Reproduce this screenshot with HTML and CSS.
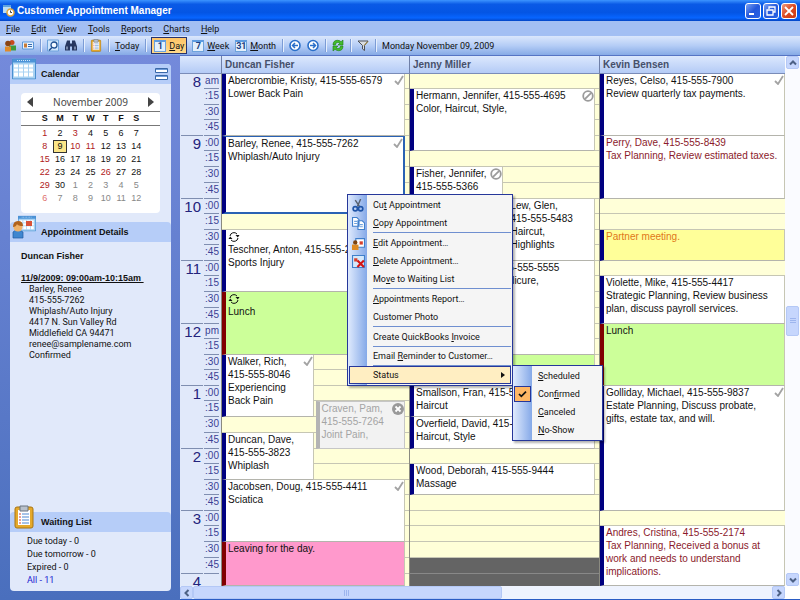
FILE: index.html
```html
<!DOCTYPE html>
<html lang="en">
  <head>
    <meta charset="UTF-8" />
    <meta name="viewport" content="width=device-width, initial-scale=1.0" />
    <title>Customer Appointment Manager</title>
    <link rel="stylesheet" href="styles.css">
  </head>
  <body>
    <!-- shared icons -->
    <svg class="defs" aria-hidden="true">
      <symbol id="check" viewBox="0 0 10 10"><path d="M1 6l3 3 5-8" fill="none" stroke="#a3a3a3" stroke-width="1.8" /></symbol>
      <symbol id="noshow" viewBox="0 0 12 12"><circle cx="6" cy="6" r="4.8" fill="#fff" stroke="#9b9b9b" stroke-width="1.8" /><path d="M2.8 9.2l6.4-6.4" stroke="#9b9b9b" stroke-width="1.8" /></symbol>
      <symbol id="cancel" viewBox="0 0 12 12"><circle cx="6" cy="6" r="6" fill="#999" /><path d="M3.5 3.5l5 5M8.5 3.5l-5 5" stroke="#fff" stroke-width="1.8" /></symbol>
      <symbol id="recur" viewBox="0 0 12 12"><path d="M2 5a4 4 0 0 1 7-2M10 7a4 4 0 0 1-7 2" fill="none" stroke="#111" /><path d="M11.500 4H7.500L9.800 6.500zM.500 8H4.500L2.200 5.500z" fill="#111" /></symbol>
      <symbol id="cal" viewBox="0 0 24 21">
        <path d="M0 0h24v21H0z" fill="#a9d2f2" /><path d="M0 0h24v4H0z" fill="#4d94d8" /><path d="M5 2h14" stroke="#d3e9fb" stroke-dasharray="1 1" />
        <path d="M2 6h4v3H2zM7 6h4v3H7zM12 6h4v3h-4zM17 6h4v3h-4zM2 10h4v3H2zM7 10h4v3H7zM12 10h4v3h-4zM17 10h4v3h-4zM2 14h4v4H2zM7 14h4v4H7zM12 14h4v4h-4zM17 14h4v4h-4z" fill="#fff" />
        <path d="M.5.500h23v20H.500z" fill="none" stroke="#4a8fd0" />
      </symbol>
      <symbol id="clip" viewBox="0 0 20 24">
        <rect x="1" y="2" width="18" height="21" rx="2" fill="#e5a92b" stroke="#a87412" /><path d="M4 5h12v15H4z" fill="#fff" />
        <path d="M6 1h8v5H6z" fill="#b9c1cb" stroke="#6b7480" /><path d="M8 9h7M8 12h7M8 15h7M8 18h7" stroke="#4c87d1" /><path d="M5 9h2M5 12h2M5 15h2M5 18h2" stroke="#d2402c" />
      </symbol>
    </svg>

    <header class="title-bar">
      <svg class="app-icon" viewBox="0 0 12 12"><path d="M0 0h8v8H0z" fill="#b9dcf5" /><path d="M0 0h8v2H0z" fill="#5fa3de" /><circle cx="7.500" cy="7.500" r="3.500" fill="#fff" stroke="#e0a63c" stroke-width="1.500" /><path d="M7.500 5.500v2h1.500" fill="none" stroke="#444" /></svg>
      <h1>Customer Appointment Manager</h1>
      <div class="window-buttons">
        <button aria-label="Minimize"><svg viewBox="0 0 14 14"><path d="M3 10h5" stroke="#fff" stroke-width="2" /></svg></button>
        <button aria-label="Restore"><svg viewBox="0 0 14 14"><path d="M5 5V3h6v5H9M3 6h6v5H3z" fill="none" stroke="#fff" stroke-width="1.300" /></svg></button>
        <button class="close" aria-label="Close"><svg viewBox="0 0 14 14"><path d="M3 3l8 8M11 3l-8 8" stroke="#fff" stroke-width="1.800" /></svg></button>
      </div>
    </header>

    <nav class="menu-bar">
      <button><u>F</u>ile</button>
      <button><u>E</u>dit</button>
      <button><u>V</u>iew</button>
      <button><u>T</u>ools</button>
      <button><u>R</u>eports</button>
      <button><u>C</u>harts</button>
      <button><u>H</u>elp</button>
    </nav>

    <div class="toolbar">
      <button aria-label="Customers"><svg viewBox="0 0 12 12"><circle cx="8" cy="3" r="2.500" fill="#c84a1e" /><path d="M5 6h7v5H5z" fill="#3f9a3a" /><circle cx="4" cy="4" r="2.800" fill="#8a4413" /><path d="M1 7h6v5H1z" fill="#e08a28" /></svg></button>
      <button aria-label="Customer card"><svg viewBox="0 0 12 12"><path d="M.500 2.500h11v7H.500z" fill="#eaf4ff" stroke="#5b96d6" /><path d="M2 4h3v4H2z" fill="#c77a36" /><path d="M6 5h4M6 7h4" stroke="#356bb0" /></svg></button>
      <span class="divider"></span>
      <button aria-label="Find appointment"><svg viewBox="0 0 12 12"><path d="M.500.500h11v11H.500z" fill="#cfe5fb" stroke="#6ea3dc" /><circle cx="7" cy="5.500" r="3" fill="#f4faff" stroke="#1f4f91" stroke-width="1.300" /><path d="M5 8l-3 3" stroke="#1f4f91" stroke-width="1.500" /></svg></button>
      <button aria-label="Find"><svg viewBox="0 0 12 12"><path d="M2 1h3v3h2V1h3l2 6v4H7V7H5v4H0V7z" fill="#27365e" /><path d="M2 7v3M10 7v3" stroke="#c9d8f2" /></svg></button>
      <span class="divider"></span>
      <button aria-label="Waiting list"><svg viewBox="0 0 20 24"><use href="#clip" /></svg></button>
      <span class="divider"></span>
      <button><span><u>T</u>oday</span></button>
      <span class="divider"></span>
      <button class="selected"><span class="num">1</span><span><u>D</u>ay</span></button>
      <button><span class="num">7</span><span><u>W</u>eek</span></button>
      <button><span class="num">31</span><span><u>M</u>onth</span></button>
      <span class="divider"></span>
      <button aria-label="Back"><svg viewBox="0 0 12 12"><circle cx="6" cy="6" r="5" fill="#fff" stroke="#2a6fc9" stroke-width="1.600" /><path d="M9 6H4M6 3.500L3.500 6 6 8.500" fill="none" stroke="#2a6fc9" stroke-width="1.500" /></svg></button>
      <button aria-label="Forward"><svg viewBox="0 0 12 12"><circle cx="6" cy="6" r="5" fill="#fff" stroke="#2a6fc9" stroke-width="1.600" /><path d="M3 6h5M6 3.500L8.500 6 6 8.500" fill="none" stroke="#2a6fc9" stroke-width="1.500" /></svg></button>
      <span class="divider"></span>
      <button aria-label="Refresh"><svg viewBox="0 0 12 12"><path d="M1 5.500C1 2 3 .800 5.500.800 7 .800 8 1.300 9 2.200L11 .500V5.500H6L7.800 3.700C6 2.300 3.500 3 3.500 5.500zM11 6.500C11 10 9 11.200 6.500 11.200 5 11.200 4 10.700 3 9.800L1 11.500V6.500H6L4.200 8.300C6 9.700 8.500 9 8.500 6.500z" fill="#43bd2c" stroke="#1c7a16" stroke-width=".6" /></svg></button>
      <span class="divider"></span>
      <button aria-label="Filter"><svg viewBox="0 0 12 12"><path d="M1 1.500h10L7.500 6v5l-2-1.500V6z" fill="#d9dde2" stroke="#4c5057" /><path d="M7 6l4-4" stroke="#b5912f" /></svg></button>
      <span class="divider"></span>
      <time datetime="2009-11-09">Monday November 09, 2009</time>
    </div>

    <main class="workspace">
      <aside class="sidebar">
        <div class="panel">
          <section>
            <div class="panel-head">
              <svg class="panel-icon" viewBox="0 0 24 21"><use href="#cal" /></svg>
              <h2>Calendar</h2>
              <button class="collapse" aria-label="Collapse"><svg viewBox="0 0 13 13"><path d="M.500.500h12v4H.500zM.500 7.500h12v4H.500z" fill="#fff" stroke="#3a68a8" /><path d="M1 1.500h11M1 8.500h11" stroke="#6f9bd8" /></svg></button>
            </div>
            <div class="month">
              <div class="month-head">
                <button aria-label="Previous month"><svg viewBox="0 0 6 10"><path d="M6 0v10L0 5z" fill="#444" /></svg></button>
                <span>November 2009</span>
                <button aria-label="Next month"><svg viewBox="0 0 6 10"><path d="M0 0v10l6-5z" fill="#444" /></svg></button>
              </div>
              <table>
                <thead>
                  <tr><th>S</th><th>M</th><th>T</th><th>W</th><th>T</th><th>F</th><th>S</th></tr>
                </thead>
                <tbody>
                  <tr><td class="busy">1</td><td>2</td><td class="busy">3</td><td>4</td><td>5</td><td>6</td><td>7</td></tr>
                  <tr><td class="busy">8</td><td><span class="today">9</span></td><td class="busy">10</td><td class="busy">11</td><td>12</td><td>13</td><td>14</td></tr>
                  <tr><td class="busy">15</td><td>16</td><td>17</td><td>18</td><td>19</td><td>20</td><td>21</td></tr>
                  <tr><td class="busy">22</td><td>23</td><td>24</td><td>25</td><td class="busy">26</td><td>27</td><td>28</td></tr>
                  <tr><td class="busy">29</td><td>30</td><td class="next">1</td><td class="next">2</td><td class="next">3</td><td class="next">4</td><td class="next">5</td></tr>
                  <tr><td class="busy next">6</td><td class="next">7</td><td class="next">8</td><td class="next">9</td><td class="next">10</td><td class="next">11</td><td class="next">12</td></tr>
                </tbody>
              </table>
            </div>
          </section>

          <section class="details">
            <div class="panel-head">
              <svg class="panel-icon" viewBox="0 0 24 24"><svg x="6" y="0" width="18" height="17" viewBox="0 0 24 21"><use href="#cal" /></svg><path d="M14 6h6v5h-6z" fill="#d95238" /><path d="M1 17q4-4 10 0v6H1z" fill="#3f86cf" stroke="#1f5aa0" stroke-width=".7" /><circle cx="6" cy="12" r="4.500" fill="#efb26a" /><path d="M1 12q0-6 5-6t5 5q-5 0-6-2-1 3-4 3z" fill="#b1621c" /></svg>
              <h2>Appointment Details</h2>
            </div>
            <h3>Duncan Fisher</h3>
            <h4>11/9/2009: 09:00am-10:15am&nbsp;</h4>
            <address>
              Barley, Renee<br>
              415-555-7262<br>
              Whiplash/Auto Injury<br>
              4417 N. Sun Valley Rd<br>
              Middlefield CA 94471<br>
              renee@samplename.com<br>
              Confirmed
            </address>
          </section>

          <section class="waiting">
            <div class="panel-head">
              <svg class="panel-icon" viewBox="0 0 20 24"><use href="#clip" /></svg>
              <h2>Waiting List</h2>
            </div>
            <ul>
              <li>Due today - 0</li>
              <li>Due tomorrow - 0</li>
              <li>Expired - 0</li>
              <li><a href="#all">All - 11</a></li>
            </ul>
          </section>
        </div>
      </aside>

      <div class="schedule">
        <div class="corner"></div>
        <h2 class="name">Duncan Fisher</h2>
        <h2 class="name">Jenny Miller</h2>
        <h2 class="name">Kevin Bensen</h2>

        <div class="times">
          <b>8</b><span>am</span><span>:15</span><span>:30</span><span>:45</span>
          <b>9</b><span>:00</span><span>:15</span><span>:30</span><span>:45</span>
          <b>10</b><span>:00</span><span>:15</span><span>:30</span><span>:45</span>
          <b>11</b><span>:00</span><span>:15</span><span>:30</span><span>:45</span>
          <b>12</b><span>pm</span><span>:15</span><span>:30</span><span>:45</span>
          <b>1</b><span>:00</span><span>:15</span><span>:30</span><span>:45</span>
          <b>2</b><span>:00</span><span>:15</span><span>:30</span><span>:45</span>
          <b>3</b><span>:00</span><span>:15</span><span>:30</span><span>:45</span>
          <b>4</b>
        </div>

        <div class="column">
          <article class="appt at-0800 len-4"><svg class="mark"><use href="#check" /></svg>Abercrombie, Kristy, 415-555-6579<br>Lower Back Pain</article>
          <article class="appt active at-0900 len-5"><svg class="mark"><use href="#check" /></svg>Barley, Renee, 415-555-7262<br>Whiplash/Auto Injury</article>
          <article class="appt at-1030 len-4"><svg class="recur"><use href="#recur" /></svg>Teschner, Anton, 415-555-2210<br>Sports Injury</article>
          <article class="appt lunch at-1130 len-4"><svg class="recur"><use href="#recur" /></svg>Lunch</article>
          <article class="appt left at-1230 len-4"><svg class="mark"><use href="#check" /></svg>Walker, Rich,<br>415-555-8046<br>Experiencing<br>Back Pain</article>
          <article class="appt right canceled at-1315 len-3"><svg class="mark round"><use href="#cancel" /></svg>Craven, Pam,<br>415-555-7264<br>Joint Pain,</article>
          <article class="appt left at-1345 len-3">Duncan, Dave,<br>415-555-3823<br>Whiplash</article>
          <article class="appt at-1430 len-4"><svg class="mark"><use href="#check" /></svg>Jacobsen, Doug, 415-555-4411<br>Sciatica</article>
          <article class="appt leave at-1530 len-3">Leaving for the day.</article>
        </div>

        <div class="column">
          <article class="appt at-0815 len-4"><svg class="mark round"><use href="#noshow" /></svg>Hermann, Jennifer, 415-555-4695<br>Color, Haircut, Style,</article>
          <article class="appt left at-0930 len-4"><svg class="mark round"><use href="#noshow" /></svg>Fisher, Jennifer,<br>415-555-5366</article>
          <article class="appt right at-1000 len-4">Lew, Glen,<br>415-555-5483<br>Haircut,<br>Highlights</article>
          <article class="appt at-1100 len-6">Harrison, Sharon, 415-555-5555<br>Deluxe Manicure, Pedicure,</article>
          <article class="appt lunch at-1230 len-2"></article>
          <article class="appt at-1300 len-2">Smallson, Fran, 415-555-2847<br>Haircut</article>
          <article class="appt at-1330 len-2">Overfield, David, 415-555-3019<br>Haircut, Style</article>
          <article class="appt at-1415 len-2">Wood, Deborah, 415-555-9444<br>Massage</article>
          <div class="closed"></div>
        </div>

        <div class="column last">
          <article class="appt at-0800 len-4"><svg class="mark"><use href="#check" /></svg>Reyes, Celso, 415-555-7900<br>Review quarterly tax payments.</article>
          <article class="appt pending at-0900 len-4">Perry, Dave, 415-555-8439<br>Tax Planning, Review estimated taxes.</article>
          <article class="appt meeting at-1030 len-2">Partner meeting.</article>
          <article class="appt at-1115 len-3">Violette, Mike, 415-555-4417<br>Strategic Planning, Review business plan, discuss payroll services.</article>
          <article class="appt lunch at-1200 len-4">Lunch</article>
          <article class="appt at-1300 len-8"><svg class="mark"><use href="#check" /></svg>Golliday, Michael, 415-555-9837<br>Estate Planning, Discuss probate, gifts, estate tax, and will.</article>
          <article class="appt pending at-1515 len-4">Andres, Cristina, 415-555-2174<br>Tax Planning, Received a bonus at work and needs to understand implications.</article>
        </div>

        <div class="scroll-v">
          <button aria-label="Scroll up"><svg viewBox="0 0 8 8"><path d="M1 5.500l3-3 3 3" /></svg></button>
          <div class="thumb"></div>
          <button aria-label="Scroll down"><svg viewBox="0 0 8 8"><path d="M1 2.500l3 3 3-3" /></svg></button>
        </div>
        <div class="scroll-h">
          <button aria-label="Scroll left"><svg viewBox="0 0 8 8"><path d="M5.500 1l-3 3 3 3" /></svg></button>
          <div class="thumb"></div>
          <button aria-label="Scroll right"><svg viewBox="0 0 8 8"><path d="M2.500 1l3 3-3 3" /></svg></button>
        </div>

        <div class="menu context">
          <button><svg viewBox="0 0 12 12"><path d="M8 0L5 7M3 1l4 6" stroke="#56606e" stroke-width="1.300" /><circle cx="3" cy="9" r="2" fill="none" stroke="#1f55a8" stroke-width="1.500" /><circle cx="8" cy="9" r="2" fill="none" stroke="#1f55a8" stroke-width="1.500" /></svg>Cu<u>t</u> Appointment</button>
          <button><svg viewBox="0 0 12 12"><path d="M.500.500h4l2 2v6h-6zM5.500 3.500h4l2 2v6h-6z" fill="#fff" stroke="#3f7fcb" /><path d="M2 4h3M2 6h3M7 7h3M7 9h3" stroke="#6fa3de" /></svg><u>C</u>opy Appointment</button>
          <hr>
          <button><svg viewBox="0 0 12 12"><path d="M3.500 1.500h8v8h-8z" fill="#fff" stroke="#3f7fcb" /><path d="M7 4h3v3H7z" fill="#d7402c" /><circle cx="3" cy="5" r="2" fill="#7d430f" /><path d="M0 7h6v5H0z" fill="#dd8a23" /></svg><u>E</u>dit Appointment…</button>
          <button><svg viewBox="0 0 12 12"><path d="M.500.500h11v11H.500z" fill="#d5e8fb" stroke="#3f7fcb" /><path d="M2 3h3v3H2z" fill="#d7402c" /><path d="M5 5l6 6M11 5l-6 6" stroke="#d41515" stroke-width="2" /></svg><u>D</u>elete Appointment…</button>
          <button>Mo<u>v</u>e to Waiting List</button>
          <hr>
          <button><u>A</u>ppointments Report…</button>
          <button>Customer Photo</button>
          <hr>
          <button>Create QuickBooks <u>I</u>nvoice</button>
          <hr class="tight">
          <button>Email <u>R</u>eminder to Customer…</button>
          <hr class="tight">
          <button class="open">Status<svg class="arrow" viewBox="0 0 4 6"><path d="M0 0v6l4-3z" fill="#111" /></svg></button>
        </div>
        <div class="menu submenu">
          <button><u>S</u>cheduled</button>
          <button><svg class="ticked" viewBox="0 0 12 12"><path d="M3 6l2 2 4-4" fill="none" stroke="#111" stroke-width="1.500" /></svg>Con<u>f</u>irmed</button>
          <button><u>C</u>anceled</button>
          <button><u>N</u>o-Show</button>
        </div>
      </div>
    </main>
  </body>
</html>
```

FILE: styles.css
```css
* {
  box-sizing: border-box;
}

body {
  margin: 0;
  height: 100vh;
  display: flex;
  flex-direction: column;
  overflow: hidden;
  font-family: "Liberation Sans", Arial, sans-serif;
  font-size: 9px;
  color: #111;
  background-color: #4a6fbd;
}

button {
  margin: 0;
  padding: 0;
  border: 0;
  background: none;
  font: inherit;
  color: inherit;
}

svg {
  display: block;
}

.defs {
  position: absolute;
  width: 0;
  height: 0;
}

h1,
h2,
h3,
h4,
ul {
  margin: 0;
  padding: 0;
  font-size: inherit;
}

/* window frame */

.title-bar {
  display: flex;
  align-items: center;
  height: 21px;
  padding: 0 3px;
  background: linear-gradient(#3c94ff, #0a5ae6 20%, #0455e4 60%, #0765ff 85%, #0345c5);
}

.app-icon {
  width: 12px;
  height: 12px;
  margin-right: 2px;
}

.title-bar h1 {
  flex: 1;
  font-size: 10px;
  color: #fff;
}

.window-buttons {
  display: flex;
  gap: 2px;
}

.window-buttons button {
  width: 16px;
  height: 16px;
  border: 1px solid #fff;
  border-radius: 3px;
  background: linear-gradient(135deg, #7ba2f2, #2458dc 50%, #2a63e4);
}

.window-buttons .close {
  background: linear-gradient(135deg, #ee9b80, #dc4a22 50%, #c83a12);
}

.menu-bar {
  display: flex;
  gap: 11px;
  height: 15px;
  padding: 0 6px;
  background-color: #a3bff3;
  font-family: Roboto, sans-serif;
}

.toolbar {
  display: flex;
  align-items: center;
  gap: 6px;
  height: 19px;
  padding: 0 4px;
  background: linear-gradient(#dbe7fc, #b5cdf6 50%, #86aae6);
  font-family: Roboto, sans-serif;
}

.toolbar button {
  display: flex;
  align-items: center;
  gap: 3px;
}

.toolbar svg {
  width: 12px;
  height: 13px;
}

.toolbar .divider {
  width: 1px;
  height: 13px;
  background-color: #7c9cd6;
  box-shadow: 1px 0 #e6effd;
}

.toolbar .num {
  width: 12px;
  height: 12px;
  border: 1px solid #6ea3dc;
  border-top: 2px solid #5d9be0;
  background-color: #e2effc;
  color: #1c3f80;
  font-weight: bold;
  line-height: 9px;
  text-align: center;
}

.toolbar .selected {
  height: 17px;
  margin: 0 -1px;
  padding: 0 2px;
  border: 1px solid #26336f;
  background: linear-gradient(#ffc566, #ffd98a);
}

.workspace {
  flex: 1;
  min-height: 0;
  display: flex;
}

/* sidebar */

.sidebar {
  width: 180px;
  display: flex;
  padding: 9px 9px 9px 10px;
  background: linear-gradient(#748adb, #4a6fbd);
}

.panel {
  flex: 1;
  display: flex;
  flex-direction: column;
  border-radius: 4px;
  background-color: #e1e9fa;
}

.panel-head {
  display: flex;
  align-items: center;
  height: 20px;
  padding: 0 3px 0 2px;
  border-radius: 4px 4px 0 0;
  background-color: #b6cdf8;
}

.panel-head h2 {
  flex: 1;
}

.panel-icon {
  width: 24px;
  height: 24px;
  margin: -10px 5px 0 0;
}

.collapse svg {
  width: 13px;
  height: 13px;
}

.month {
  margin: 9px 11px;
  height: 120px;
  border-radius: 4px;
  background-color: #fff;
}

.month-head {
  display: flex;
  justify-content: space-between;
  align-items: center;
  height: 19px;
  padding: 0 6px;
  border-bottom: 1px solid #777;
  color: #4a4a4a;
  font-family: "Noto Sans", sans-serif;
  font-size: 10px;
}

.month-head svg {
  width: 6px;
  height: 10px;
}

.month table {
  width: 100%;
  padding: 0 16px;
  border-spacing: 0;
  table-layout: fixed;
  text-align: center;
  background: linear-gradient(#777, #777) 0 13px / 100% 1px no-repeat;
}

.month th,
.month td {
  padding: 0;
  height: 13px;
  line-height: 13px;
}

.month thead th {
  height: 15px;
  line-height: 13px;
  vertical-align: top;
}

.month .next {
  color: #888;
}

.month .busy {
  color: #b02020;
}

.month .busy.next {
  color: #e07070;
}

.month .today {
  display: block;
  margin: 0 1px;
  border: 1px solid #333;
  background-color: #fbe588;
  line-height: 11px;
}

.details h3 {
  margin: 9px 11px 11px;
  line-height: 11px;
}

.details h4 {
  margin: 0 11px;
  line-height: 11px;
  text-decoration: underline;
}

.details address {
  padding: 0 19px;
  font-family: Roboto, sans-serif;
  font-style: normal;
  line-height: 11px;
}

.waiting {
  margin-top: auto;
  font-family: Roboto, sans-serif;
}

.waiting h2 {
  font-family: "Liberation Sans", Arial, sans-serif;
}

.waiting ul {
  padding: 3px 17px 4px;
  line-height: 13px;
  list-style: none;
}

.waiting a {
  color: #1a1ad0;
  text-decoration: none;
}

/* day view */

.schedule {
  position: relative;
  flex: 1;
  min-width: 0;
  display: grid;
  grid-template-columns: 41px 188fr 190fr 186fr 15px;
  grid-template-rows: 18px 1fr 13px;
  border-top: 1px solid #5674c4;
  border-bottom: 1px solid #2a5cc4;
  background-color: #fff;
}

.corner,
.name {
  border-bottom: 1px solid #7a8cb8;
  background: linear-gradient(#dce8fd, #b4cbf6);
}

.name {
  padding-left: 3px;
  border-left: 1px solid #6f7fa8;
  font-size: 10px;
  line-height: 17px;
  color: #46506a;
}

/* two hours take 125px, split over eight quarter rows */
.times,
.column {
  grid-row: 2;
  min-height: 0;
  display: grid;
  grid-template-rows: repeat(4, 15px 16px 15px 16px 15px 16px 16px 16px) 1fr;
  overflow: hidden;
}

.times {
  grid-template-columns: 22px 15px;
  column-gap: 1px;
  padding-left: 1px;
  background-color: #e1e9fa;
  color: #23237c;
}

.times b {
  grid-column: 1;
  grid-row: span 4;
  padding-right: 2px;
  font-size: 15px;
  font-weight: normal;
  line-height: 16px;
  text-align: right;
  border-bottom: 1px solid #7f8eb0;
}

.times b:last-child {
  border: 0;
  grid-row: span 1;
}

.times span {
  grid-column: 2;
  font-size: 10px;
  line-height: 13px;
  text-align: right;
  color: #3a3f94;
  border-bottom: 1px solid #7f8eb0;
}

.column {
  --line: #c6c6b4;
  grid-template-columns: 1fr 1fr;
  padding-right: 4px;
  border-left: 1px solid #8a8a80;
  background-color: #ffffd8;
  background-image: linear-gradient(
    transparent 14px, var(--line) 14px 15px,
    transparent 15px 30px, var(--line) 30px 31px,
    transparent 31px 45px, var(--line) 45px 46px,
    transparent 46px 61px, var(--line) 61px 62px,
    transparent 62px 76px, var(--line) 76px 77px,
    transparent 77px 92px, var(--line) 92px 93px,
    transparent 93px 108px, var(--line) 108px 109px,
    transparent 109px 124px, var(--line) 124px 125px
  );
  background-size: 100% 125px;
}

.column.last {
  padding-right: 0;
}

.appt {
  grid-column: 1 / 3;
  position: relative;
  min-height: 0;
  overflow: hidden;
  padding: 0 5px 0 2px;
  border-left: 4px solid #000080;
  border-right: 1px solid #c6c6b4;
  border-bottom: 1px solid #b4b4ac;
  background-color: #fff;
  font-size: 10px;
  line-height: 13px;
}

.appt.left {
  grid-column: 1;
}

.appt.right {
  grid-column: 2;
  margin-left: 2px;
}

.appt.active {
  border-top: 1px solid #2a62b4;
  border-right: 2px solid #2a62b4;
  border-bottom: 2px solid #2a62b4;
}

.appt.lunch {
  border-left-color: #800000;
  background-color: #ccff99;
}

.appt.leave {
  border-left-color: #800000;
  background-color: #ff99cc;
}

.appt.meeting {
  background-color: #ffff99;
  color: #e07818;
}

.appt.pending {
  color: #8b1a2b;
}

.appt.canceled {
  border: 1px solid #c6c6c6;
  border-left: 4px solid #b4b4b4;
  background-color: #f2f2f2;
  color: #a4a4a4;
}

.mark {
  position: absolute;
  top: 1px;
  right: 0;
  width: 10px;
  height: 10px;
}

.mark.round {
  width: 12px;
  height: 12px;
}

.recur {
  width: 12px;
  height: 12px;
  margin-top: 1px;
}

.closed {
  grid-column: 1 / 3;
  grid-row: 32 / 34;
  margin-right: -4px;
  background: linear-gradient(#888, #888) 0 15px / 100% 1px no-repeat #646464;
}

.at-0800 { grid-row-start: 1; }
.at-0815 { grid-row-start: 2; }
.at-0900 { grid-row-start: 5; }
.at-0930 { grid-row-start: 7; }
.at-1000 { grid-row-start: 9; }
.at-1030 { grid-row-start: 11; }
.at-1100 { grid-row-start: 13; }
.at-1115 { grid-row-start: 14; }
.at-1130 { grid-row-start: 15; }
.at-1200 { grid-row-start: 17; }
.at-1230 { grid-row-start: 19; }
.at-1300 { grid-row-start: 21; }
.at-1315 { grid-row-start: 22; }
.at-1330 { grid-row-start: 23; }
.at-1345 { grid-row-start: 24; }
.at-1415 { grid-row-start: 26; }
.at-1430 { grid-row-start: 27; }
.at-1515 { grid-row-start: 30; }
.at-1530 { grid-row-start: 31; }

.len-2 { grid-row-end: span 2; }
.len-3 { grid-row-end: span 3; }
.len-4 { grid-row-end: span 4; }
.len-5 { grid-row-end: span 5; }
.len-6 { grid-row-end: span 6; }
.len-8 { grid-row-end: span 8; }

/* scroll bars */

.scroll-v {
  grid-column: 5;
  grid-row: 1 / 3;
  display: flex;
  flex-direction: column;
  justify-content: space-between;
  padding: 0 1px;
  background-color: #fafbff;
}

.scroll-h {
  grid-column: 1 / 5;
  grid-row: 3;
  display: flex;
  background-color: #eef3fe;
}

.scroll-v button,
.scroll-h button,
.thumb {
  flex: none;
  display: flex;
  align-items: center;
  justify-content: center;
  width: 13px;
  height: 13px;
  border: 1px solid #b4c8f6;
  border-radius: 2px;
  background-color: #c6d6fd;
}

.scroll-v button svg,
.scroll-h button svg {
  width: 8px;
  height: 8px;
  fill: none;
  stroke: #4d6185;
  stroke-width: 2px;
}

.thumb::after {
  content: "";
  width: 6px;
  height: 6px;
  background: repeating-linear-gradient(#9db5ee 0 1px, transparent 1px 2px);
}

.scroll-v .thumb {
  height: 30px;
}

.scroll-h .thumb {
  width: 51%;
}

.scroll-h .thumb::after {
  background: repeating-linear-gradient(90deg, #9db5ee 0 1px, transparent 1px 2px);
}

.scroll-h button:last-child {
  margin-left: auto;
}

/* pop-up menus */

.menu {
  position: absolute;
  padding: 1px;
  border: 1px solid #26379a;
  background: linear-gradient(90deg, #dfeafd, #85a9e8) 0 0 / 19px 100% no-repeat #f5f5f5;
  box-shadow: 2px 2px 2px rgba(0, 0, 0, 0.3);
  font-family: Roboto, sans-serif;
}

.context {
  left: 167px;
  top: 138px;
  width: 166px;
}

.submenu {
  left: 332px;
  top: 309px;
  width: 91px;
}

.menu button {
  position: relative;
  display: block;
  width: 100%;
  height: 18px;
  padding-left: 24px;
  text-align: left;
}

.menu hr {
  height: 2px;
  margin: 0 0 0 24px;
  border: 0;
  border-top: 1px solid #6f8fd0;
}

.menu hr.tight {
  height: 1px;
}

.menu svg {
  position: absolute;
  left: 3px;
  top: 3px;
  width: 13px;
  height: 13px;
}

.menu .open {
  border: 1px solid #26379a;
  background-color: #ffeec2;
  padding-left: 23px;
}

.menu .arrow {
  left: auto;
  right: 5px;
  top: 5px;
  width: 4px;
  height: 6px;
}

.menu .ticked {
  left: 0;
  top: 1px;
  width: 17px;
  height: 16px;
  border: 1px solid #26379a;
  background-color: #ffb765;
}
```
